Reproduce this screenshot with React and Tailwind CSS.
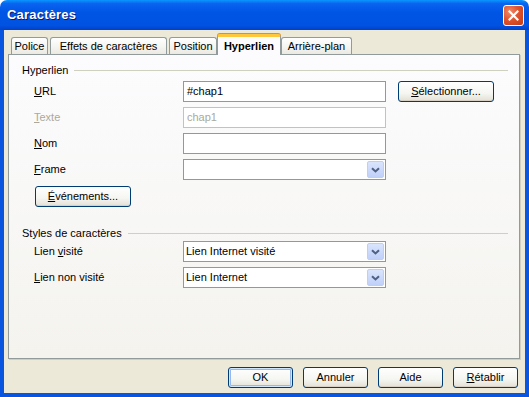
import React from 'react'

const font = { fontFamily: '"Liberation Sans", Arial, sans-serif' }

function U({ children }) {
  return <span className="underline underline-offset-[1px]">{children}</span>
}

function XpButton({ children, className = '', primary = false }) {
  return (
    <div
      className={
        'h-[21px] flex items-center justify-center rounded-[3px] border border-[#003c74] bg-[linear-gradient(to_bottom,#ffffff_0%,#f5f5f1_60%,#e3e0d4_100%)] text-[11px] text-black ' +
        (primary ? 'shadow-[inset_0_0_0_1px_#cee7ff,inset_0_0_0_2px_#98b8ea] ' : 'shadow-[inset_0_-1px_0_#d6d0c5] ') +
        className
      }
    >
      {children}
    </div>
  )
}

function TextBox({ value = '', disabled = false }) {
  return (
    <div
      className={
        'h-[21px] bg-white border flex items-center pl-[3px] text-[11px] ' +
        (disabled ? 'border-[#b8c4cf] text-[#aca899]' : 'border-[#7f9db9] text-black')
      }
    >
      {value}
    </div>
  )
}

function Combo({ value = '' }) {
  return (
    <div className="h-[21px] bg-white border border-[#7f9db9] flex items-center justify-between pl-[2px] pr-[1px] text-[11px] text-black">
      <span>{value}</span>
      <div className="w-[17px] h-[17px] rounded-[2px] border border-[#bccffa] bg-[linear-gradient(to_bottom,#dae4fc_0%,#bfd0f9_100%)] flex items-center justify-center">
        <svg width="9" height="6" viewBox="0 0 9 6">
          <path d="M1 1.2 L4.5 4.5 L8 1.2" fill="none" stroke="#4d6185" strokeWidth="2" />
        </svg>
      </div>
    </div>
  )
}

function GroupHeader({ title }) {
  return (
    <div className="h-[14px] flex items-center gap-[6px] pr-[11px]">
      <span className="text-[11px] leading-[14px] text-black whitespace-nowrap">{title}</span>
      <div className="flex-1 h-px bg-[#d0d0bf]" />
    </div>
  )
}

function Tab({ label, width, selected = false, className = '' }) {
  if (selected) {
    return (
      <div
        className={
          'relative z-10 h-[21px] -mb-px flex items-center justify-center rounded-t-[3px] border-x border-[#919b9c] border-t-[3px] border-t-[#ffc83c] bg-[#fcfcfe] shadow-[0_-1px_0_#e68b2c] text-[11px] font-bold text-black ' +
          className
        }
        style={{ width }}
      >
        {label}
      </div>
    )
  }
  return (
    <div
      className={
        'h-[17px] flex items-center justify-center rounded-t-[3px] border-x border-t border-[#919b9c] bg-[linear-gradient(to_bottom,#ffffff_0%,#f3f3ef_60%,#ebe9e1_100%)] text-[11px] text-black ' +
        className
      }
      style={{ width }}
    >
      {label}
    </div>
  )
}

export default function App() {
  return (
    <div className="w-[529px] h-[397px] flex flex-col bg-white" style={font}>
      {/* title bar */}
      <div className="h-[30px] shrink-0 rounded-t-[7px] bg-[linear-gradient(to_bottom,#0997ff_0%,#0a64f0_12%,#0055e5_40%,#0053e1_85%,#0040c8_100%)] flex items-center justify-between pl-[7px] pr-[5px]">
        <span className="text-[13px] font-bold text-white tracking-[0.2px] [text-shadow:1px_1px_0_#0a1a6a]">
          Caractères
        </span>
        <div className="w-[21px] h-[21px] rounded-[3px] border border-white bg-[radial-gradient(circle_at_30%_30%,#f08b6a_0%,#e0542e_45%,#c23b16_100%)] flex items-center justify-center">
          <svg width="11" height="11" viewBox="0 0 11 11">
            <path d="M1.5 1.5 L9.5 9.5 M9.5 1.5 L1.5 9.5" stroke="white" strokeWidth="2.2" strokeLinecap="square" />
          </svg>
        </div>
      </div>

      {/* body */}
      <div className="flex-1 flex flex-col bg-[#ece9d8] border-x-[4px] border-b-[4px] border-[#0a55e0]">
        {/* tabs */}
        <div className="h-[24px] pt-[4px] pl-[7px] flex items-end">
          <Tab label="Police" width={37} />
          <Tab label="Effets de caractères" width={117} className="ml-[2px]" />
          <Tab label="Position" width={48} className="ml-[2px]" />
          <Tab label="Hyperlien" width={64} selected />
          <Tab label="Arrière-plan" width={71} />
        </div>

        {/* panel */}
        <div className="ml-[4px] w-[512px] h-[305px] border border-[#919b9c] bg-[linear-gradient(to_bottom,#fcfcfe_0%,#f4f3ee_100%)] shadow-[1px_1px_0_#d0cebf] pl-[13px] pt-[8px]">
          <GroupHeader title="Hyperlien" />
          <div className="pl-[12px] mt-[4px] grid grid-cols-[149px_203px_12px_96px] auto-rows-[21px] gap-y-[5px] items-center text-[11px] text-black">
            <span><U>U</U>RL</span>
            <TextBox value="#chap1" />
            <span />
            <XpButton>
              <span><U>S</U>électionner...</span>
            </XpButton>

            <span className="text-[#aca899]"><U>T</U>exte</span>
            <TextBox value="chap1" disabled />
            <span />
            <span />

            <span><U>N</U>om</span>
            <TextBox />
            <span />
            <span />

            <span><U>F</U>rame</span>
            <Combo />
            <span />
            <span />
          </div>
          <div className="pl-[13px] mt-[6px]">
            <XpButton className="w-[96px]">
              <span><U>É</U>vénements...</span>
            </XpButton>
          </div>

          <div className="mt-[19px]">
            <GroupHeader title="Styles de caractères" />
          </div>
          <div className="pl-[12px] mt-[1px] grid grid-cols-[149px_203px] auto-rows-[21px] gap-y-[5px] items-center text-[11px] text-black">
            <span>Lien <U>v</U>isité</span>
            <Combo value="Lien Internet visité" />
            <span><U>L</U>ien non visité</span>
            <Combo value="Lien Internet" />
          </div>
        </div>

        {/* buttons */}
        <div className="mt-[8px] flex justify-end gap-[10px] pr-[7px]">
          <XpButton primary className="w-[65px]">OK</XpButton>
          <XpButton className="w-[65px]">Annuler</XpButton>
          <XpButton className="w-[65px]">Aide</XpButton>
          <XpButton className="w-[65px]">
            <span><U>R</U>établir</span>
          </XpButton>
        </div>
      </div>
    </div>
  )
}
